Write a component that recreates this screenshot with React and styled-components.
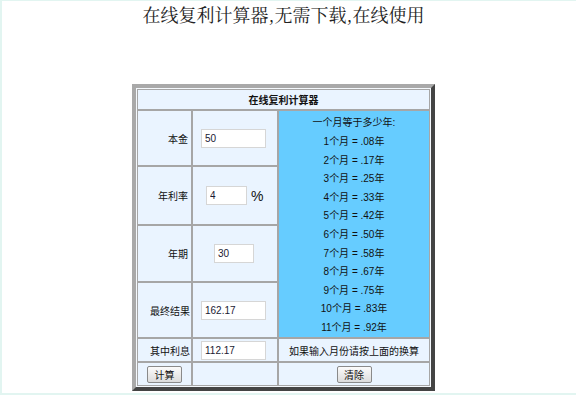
import React from 'react'
import styled, { createGlobalStyle } from 'styled-components'

const GlobalStyle = createGlobalStyle`
  html, body {
    margin: 0;
    padding: 0;
    background: #fff;
  }
  body {
    font-family: Tahoma, "Liberation Sans", "Noto Sans CJK SC", sans-serif;
  }
`;

const Page = styled.div`
  box-sizing: border-box;
  height: 395px;
  border-left: 2px solid #e2f5f1;
  border-top: 1px solid #e2f5f1;
  border-bottom: 2px solid #e2f5f1;
  padding-right: 11px;
`;

const Title = styled.h1`
  margin: 0;
  padding-top: 2px;
  height: 81px;
  text-align: center;
  font-family: "Noto Serif CJK SC", "Liberation Serif", "Noto Sans CJK SC", serif;
  font-weight: 400;
  font-size: 18px;
  line-height: 22px;
  color: #222;
`;

const Calc = styled.div`
  box-sizing: border-box;
  width: 303px;
  margin: 0 auto;
  padding: 1px;
  border: 4px solid;
  border-color: #a9a9a9 #444 #444 #a9a9a9;
  background: #f4f8fc;
  display: grid;
  grid-template-columns: 55px 86px 152px;
  grid-template-rows: 21px 56px 59px 57px 56px 24px 24px;
  font-size: 10px;
  color: #111;
  font-family: Tahoma, "Liberation Sans", "Noto Sans CJK SC", sans-serif;
`;

const Cell = styled.div`
  box-sizing: border-box;
  border: 1px solid #a6a6a6;
  background: ${p => (p.$blue ? '#66ccff' : '#eaf4ff')};
  display: flex;
  align-items: center;
  justify-content: ${p => p.$align || 'center'};
  padding: ${p => p.$pad || '0'};
  grid-column: ${p => p.$col || 'auto'};
  grid-row: ${p => p.$row || 'auto'};
  font-weight: ${p => (p.$bold ? 700 : 400)};
`;

const Input = styled.input`
  box-sizing: border-box;
  width: ${p => p.$w || 65}px;
  height: 19px;
  border: 1px solid #d6d6d6;
  background: #fff;
  padding: 0 0 0 3px;
  font-family: Tahoma, "Liberation Sans", sans-serif;
  font-size: 10px;
  color: #1a1a33;
  outline: none;
`;

const Percent = styled.span`
  margin-left: 4px;
  font-size: 14px;
  font-family: Tahoma, "Liberation Sans", sans-serif;
`;

const Months = styled.ul`
  list-style: none;
  margin: 4px 0 0;
  padding: 0;
  text-align: center;
  line-height: 18.6px;
`;

const Button = styled.button`
  box-sizing: border-box;
  width: 35px;
  height: 17px;
  padding: 0;
  border: 1px solid #8a8a8a;
  border-radius: 2px;
  background: linear-gradient(#fbfbfb, #dcdcdc);
  font-family: "Noto Sans CJK SC", sans-serif;
  font-size: 10px;
  line-height: 15px;
  color: #111;
`;

const rates = ['.08', '.17', '.25', '.33', '.42', '.50', '.58', '.67', '.75', '.83', '.92'];

export default function App() {
  return (
    <Page>
      <GlobalStyle />
      <Title>在线复利计算器,无需下载,在线使用</Title>
      <Calc>
        <Cell $col="1 / 4" $bold>在线复利计算器</Cell>

        <Cell $align="flex-end" $pad="0 3px 0 0">本金</Cell>
        <Cell $align="flex-start" $pad="0 0 0 8px">
          <Input defaultValue="50" />
        </Cell>
        <Cell $blue $col="3" $row="2 / 6">
          <Months>
            <li>一个月等于多少年:</li>
            {rates.map((r, i) => (
              <li key={r}>{i + 1}个月 = {r}年</li>
            ))}
          </Months>
        </Cell>

        <Cell $align="flex-end" $pad="0 3px 0 0">年利率</Cell>
        <Cell $align="flex-start" $pad="0 0 0 13px">
          <Input $w={41} defaultValue="4" />
          <Percent>%</Percent>
        </Cell>

        <Cell $align="flex-end" $pad="0 3px 0 0">年期</Cell>
        <Cell $align="flex-start" $pad="0 0 0 21px">
          <Input $w={40} defaultValue="30" />
        </Cell>

        <Cell $align="flex-end" $pad="0 1px 0 0">最终结果</Cell>
        <Cell $align="flex-start" $pad="0 0 0 8px">
          <Input defaultValue="162.17" />
        </Cell>

        <Cell $align="flex-end" $pad="0 1px 0 0">其中利息</Cell>
        <Cell $align="flex-start" $pad="0 0 0 8px">
          <Input defaultValue="112.17" />
        </Cell>
        <Cell>如果输入月份请按上面的换算</Cell>

        <Cell>
          <Button>计算</Button>
        </Cell>
        <Cell />
        <Cell>
          <Button>清除</Button>
        </Cell>
      </Calc>
    </Page>
  );
}
